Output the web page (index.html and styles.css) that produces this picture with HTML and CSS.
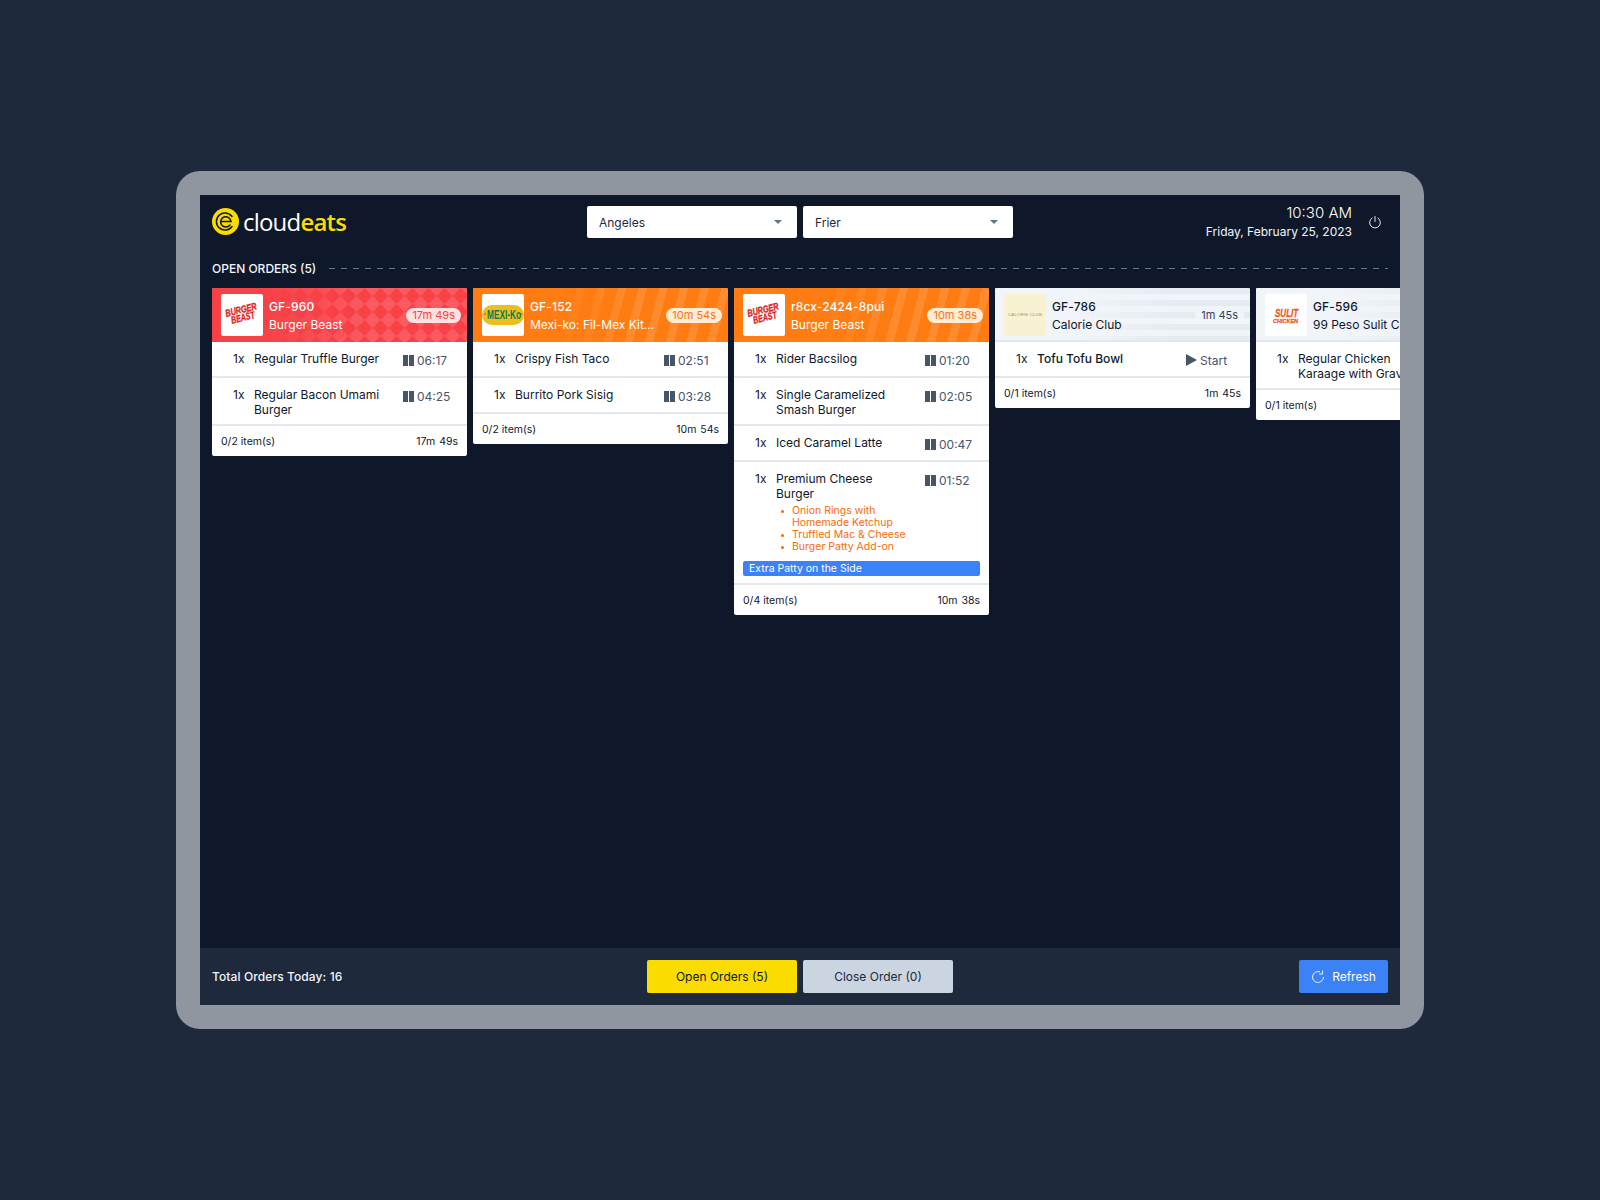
FILE: index.html
```html
<!DOCTYPE html>
<html lang="en">
<head>
    <meta charset="UTF-8">
    <title>CloudEats Kitchen Display</title>
    <link rel="stylesheet" href="styles.css">
</head>
<body>
    <div class="device">
        <div class="screen">
            <header class="topbar">
                <div class="logo">
                    <svg class="logo-mark" width="27" height="27" viewBox="0 0 27 27">
                        <circle cx="13.5" cy="13.5" r="13.5" fill="#fadc00"/>
                        <path d="M20 8.5a8.6 8.6 0 1 0 0 10" fill="none" stroke="#0f172a" stroke-width="1.5" stroke-linecap="round"/>
                        <path d="M18 17a5.2 5.2 0 1 1 1-3.5H9.5" fill="none" stroke="#0f172a" stroke-width="1.5" stroke-linecap="round"/>
                    </svg>
                    <span class="logo-text">cloud<b>eats</b></span>
                </div>
                <div class="selects">
                    <div class="select">Angeles <i class="caret"></i></div>
                    <div class="select">Frier <i class="caret"></i></div>
                </div>
                <div class="clock">
                    <div class="clock-text">
                        <div class="time">10:30 AM</div>
                        <div class="date">Friday, February 25, 2023</div>
                    </div>
                    <svg class="power" width="14" height="14" viewBox="0 0 14 14" fill="none" stroke="#e2e8f0" stroke-width="1" stroke-linecap="round">
                        <path d="M7 1.5v5"/>
                        <path d="M4 3a5.4 5.4 0 1 0 6 0"/>
                    </svg>
                </div>
            </header>

            <div class="section-title">
                <span>OPEN ORDERS (5)</span>
                <div class="dashes"></div>
            </div>

            <main class="board">
                <section class="card">
                    <div class="card-head red">
                        <div class="brand">
                            <svg viewBox="0 0 42 42" width="42" height="42"><g class="bb-logo" transform="rotate(-14 21 20)"><text transform="translate(5 19) scale(.74 1)">BURGER</text><text transform="translate(9 27) scale(.71 1)">BEAST</text></g></svg>
                        </div>
                        <div class="head-text">
                            <div class="order-no">GF-960</div>
                            <div class="store">Burger Beast</div>
                        </div>
                        <span class="badge badge-red">17m 49s</span>
                    </div>
                    <div class="row">
                        <span class="qty">1x</span>
                        <div class="item">Regular Truffle Burger</div>
                        <div class="timer"><i class="pause"></i>06:17</div>
                    </div>
                    <div class="row">
                        <span class="qty">1x</span>
                        <div class="item">Regular Bacon Umami Burger</div>
                        <div class="timer"><i class="pause"></i>04:25</div>
                    </div>
                    <div class="card-foot"><span>0/2 item(s)</span><span>17m 49s</span></div>
                </section>

                <section class="card">
                    <div class="card-head orange">
                        <div class="brand">
                            <svg viewBox="0 0 42 42" width="42" height="42">
                                <rect x="0" y="11" width="42" height="20" rx="10" fill="#ecc01c"/>
                                <circle cx="3" cy="20" r="1" fill="#e0567f"/>
                                <circle cx="39" cy="20" r="1" fill="#e0567f"/>
                                <text class="mexi-logo" transform="translate(5 25) scale(.64 1)">MEXI-Ko</text>
                            </svg>
                        </div>
                        <div class="head-text">
                            <div class="order-no">GF-152</div>
                            <div class="store">Mexi-ko: Fil-Mex Kitchen</div>
                        </div>
                        <span class="badge badge-orange">10m 54s</span>
                    </div>
                    <div class="row">
                        <span class="qty">1x</span>
                        <div class="item">Crispy Fish Taco</div>
                        <div class="timer"><i class="pause"></i>02:51</div>
                    </div>
                    <div class="row">
                        <span class="qty">1x</span>
                        <div class="item">Burrito Pork Sisig</div>
                        <div class="timer"><i class="pause"></i>03:28</div>
                    </div>
                    <div class="card-foot"><span>0/2 item(s)</span><span>10m 54s</span></div>
                </section>

                <section class="card">
                    <div class="card-head orange">
                        <div class="brand">
                            <svg viewBox="0 0 42 42" width="42" height="42"><g class="bb-logo" transform="rotate(-14 21 20)"><text transform="translate(5 19) scale(.74 1)">BURGER</text><text transform="translate(9 27) scale(.71 1)">BEAST</text></g></svg>
                        </div>
                        <div class="head-text">
                            <div class="order-no">r8cx-2424-8pui</div>
                            <div class="store">Burger Beast</div>
                        </div>
                        <span class="badge badge-orange">10m 38s</span>
                    </div>
                    <div class="row">
                        <span class="qty">1x</span>
                        <div class="item">Rider Bacsilog</div>
                        <div class="timer"><i class="pause"></i>01:20</div>
                    </div>
                    <div class="row">
                        <span class="qty">1x</span>
                        <div class="item">Single Caramelized Smash Burger</div>
                        <div class="timer"><i class="pause"></i>02:05</div>
                    </div>
                    <div class="row">
                        <span class="qty">1x</span>
                        <div class="item">Iced Caramel Latte</div>
                        <div class="timer"><i class="pause"></i>00:47</div>
                    </div>
                    <div class="row row-notes">
                        <div class="row-main">
                            <span class="qty">1x</span>
                            <div class="item">
                                Premium Cheese Burger
                                <ul class="addons">
                                    <li>Onion Rings with Homemade Ketchup</li>
                                    <li>Truffled Mac &amp; Cheese</li>
                                    <li>Burger Patty Add-on</li>
                                </ul>
                            </div>
                            <div class="timer"><i class="pause"></i>01:52</div>
                        </div>
                        <div class="note">Extra Patty on the Side</div>
                    </div>
                    <div class="card-foot"><span>0/4 item(s)</span><span>10m 38s</span></div>
                </section>

                <section class="card">
                    <div class="card-head grey">
                        <div class="brand brand-cream">
                            <svg viewBox="0 0 42 42" width="42" height="42"><text class="calorie-logo" x="21" y="22" text-anchor="middle">CALORIE CLUB</text></svg>
                        </div>
                        <div class="head-text">
                            <div class="order-no">GF-786</div>
                            <div class="store">Calorie Club</div>
                        </div>
                        <span class="badge badge-grey">1m 45s</span>
                    </div>
                    <div class="row">
                        <span class="qty">1x</span>
                        <div class="item item-new">Tofu Tofu Bowl</div>
                        <div class="timer"><i class="play"></i>Start</div>
                    </div>
                    <div class="card-foot"><span>0/1 item(s)</span><span>1m 45s</span></div>
                </section>

                <section class="card">
                    <div class="card-head grey">
                        <div class="brand">
                            <svg viewBox="0 0 42 42" width="42" height="42"><g class="sulit-logo"><text transform="translate(10 23) scale(.73 1)">SULIT</text><text class="sulit-sub" transform="translate(8 29) scale(.92 1)">CHICKEN</text></g></svg>
                        </div>
                        <div class="head-text">
                            <div class="order-no">GF-596</div>
                            <div class="store">99 Peso Sulit Chicken</div>
                        </div>
                        <span class="badge badge-grey">2m 10s</span>
                    </div>
                    <div class="row">
                        <span class="qty">1x</span>
                        <div class="item">Regular Chicken Karaage with Gravy</div>
                        <div class="timer"><i class="play"></i>Start</div>
                    </div>
                    <div class="card-foot"><span>0/1 item(s)</span><span>2m 10s</span></div>
                </section>
            </main>

            <footer class="bottombar">
                <div class="total">Total Orders Today: 16</div>
                <div class="tabs">
                    <button class="btn btn-yellow">Open Orders (5)</button>
                    <button class="btn btn-grey">Close Order (0)</button>
                </div>
                <button class="btn btn-blue">
                    <svg width="14" height="14" viewBox="0 0 14 14" fill="none" stroke="#fff" stroke-width="0.9" stroke-linecap="round" stroke-linejoin="round">
                        <path d="M8.6 1.7a5.5 5.5 0 1 0 3.9 5.6"/>
                        <path d="M11.6 1v3h-3"/>
                    </svg>
                    Refresh
                </button>
            </footer>
        </div>
    </div>
</body>
</html>
```

FILE: styles.css
```css
* {
    box-sizing: border-box;
}

body {
    margin: 0;
    height: 1200px;
    background-color: #1e293b;
    font-family: Inter, "Liberation Sans", sans-serif;
    overflow: hidden;
}

.device {
    width: 1248px;
    height: 858px;
    margin: 171px 0 0 176px;
    padding: 24px;
    background-color: #8f96a0;
    border-radius: 24px;
}

.screen {
    height: 810px;
    background-color: #0f172a;
    display: flex;
    flex-direction: column;
    overflow: hidden;
}

/* top bar */
.topbar {
    height: 64px;
    padding: 8px 12px 0;
    flex: none;
    display: grid;
    grid-template-columns: 1fr auto 1fr;
    align-items: start;
}

.logo {
    margin-top: 5px;
    display: flex;
    align-items: center;
    gap: 4px;
}

.logo-text {
    font-family: "Open Sans", sans-serif;
    font-size: 24px;
    font-weight: 500;
    letter-spacing: -0.8px;
    color: #fff;
    line-height: 27px;
}

.logo-text b {
    color: #fadc00;
    font-weight: 600;
}

.selects {
    margin-top: 3px;
    display: flex;
    gap: 6px;
}

.select {
    width: 210px;
    height: 32px;
    padding: 0 12px;
    background-color: #fff;
    border-radius: 2px;
    font-size: 12px;
    color: #1e293b;
    display: flex;
    align-items: center;
    justify-content: space-between;
}

.caret {
    width: 0;
    height: 0;
    margin-right: 3px;
    border-left: 4.5px solid transparent;
    border-right: 4.5px solid transparent;
    border-top: 4.5px solid #64748b;
}

.clock {
    display: flex;
    justify-content: flex-end;
    align-items: center;
    gap: 16px;
    padding-right: 6px;
}

.clock-text {
    text-align: right;
    color: #fff;
}

.time {
    font-size: 15px;
    font-weight: 300;
    line-height: 20px;
}

.date {
    font-size: 12px;
    line-height: 18px;
    color: #f1f5f9;
}

.section-title {
    flex: none;
    height: 18px;
    padding: 0 12px;
    display: flex;
    align-items: center;
    gap: 13px;
    font-size: 12px;
    font-weight: 500;
    color: #f1f5f9;
}

.dashes {
    flex: 1;
    height: 1px;
    background-image: repeating-linear-gradient(to right, #64748b 0, #64748b 6px, transparent 6px, transparent 12px);
}

/* cards */
.board {
    flex: 1;
    padding: 11px 0 0 12px;
    display: flex;
    align-items: flex-start;
    gap: 6px;
    overflow: hidden;
}

.card {
    width: 255px;
    flex: none;
    background-color: #fff;
    border-radius: 2px;
    overflow: hidden;
}

.card-head {
    height: 54px;
    padding: 6px;
    padding-left: 9px;
    display: flex;
    align-items: center;
    gap: 6px;
    color: #fff;
}

.red {
    background-color: #f74147;
    background-image:
        linear-gradient(to right, #f74147 20%, rgba(247, 65, 71, 0) 60%),
        linear-gradient(45deg, #fb5a60 25%, transparent 25%),
        linear-gradient(-45deg, #fb5a60 25%, transparent 25%),
        linear-gradient(135deg, #fb5a60 25%, transparent 25%),
        linear-gradient(-135deg, #fb5a60 25%, transparent 25%);
    background-size: 100% 100%, 16px 16px, 16px 16px, 16px 16px, 16px 16px;
}

.orange {
    background-color: #fe7c12;
    background-image:
        linear-gradient(to right, #fe7c12 30%, rgba(254, 124, 18, 0) 65%),
        repeating-linear-gradient(105deg, rgba(255, 255, 255, 0.12) 0, rgba(255, 255, 255, 0.12) 8px, transparent 8px, transparent 20px);
}

.grey {
    color: #0f172a;
    background-color: #f1f5f9;
    background-image:
        linear-gradient(to right, #f1f5f9 30%, rgba(241, 245, 249, 0) 70%),
        repeating-linear-gradient(to bottom, #e6ebf2 0, #e6ebf2 6px, #f1f5f9 6px, #f1f5f9 12px);
    box-shadow: inset 0 -2px 0 #e2e8f0;
}

.brand {
    width: 42px;
    height: 42px;
    flex: none;
    background-color: #fff;
    border-radius: 2px;
    overflow: hidden;
}

.brand-cream {
    background-color: #f8f1d2;
}

.brand svg {
    display: block;
}

.bb-logo {
    font-family: "Liberation Sans", sans-serif;
    font-weight: 700;
    font-style: italic;
    font-size: 10px;
    fill: #dc2626;
    stroke: #dc2626;
    stroke-width: 0.4px;
}

.mexi-logo {
    font-family: "Liberation Sans", sans-serif;
    font-weight: 700;
    font-size: 13px;
    fill: #0d7a57;
}

.calorie-logo {
    font-family: "Liberation Sans", sans-serif;
    font-size: 4.4px;
    letter-spacing: 0.15px;
    fill: #94a052;
}

.sulit-logo {
    font-family: "Liberation Sans", sans-serif;
    font-weight: 700;
    font-style: italic;
    font-size: 11px;
    fill: #ea5a1a;
    stroke: #ea5a1a;
    stroke-width: 0.3px;
}

.sulit-sub {
    font-size: 6px;
}

.head-text {
    flex: 1;
    min-width: 0;
    margin-top: 2px;
}

.order-no {
    font-size: 12px;
    font-weight: 500;
    letter-spacing: 0.15px;
    line-height: 18px;
    white-space: nowrap;
}

.store {
    font-size: 12px;
    line-height: 18px;
    white-space: nowrap;
    overflow: hidden;
    text-overflow: ellipsis;
}

.badge {
    flex: none;
    font-size: 11px;
    line-height: 15px;
    padding: 0 6px;
    border-radius: 8px;
}

.badge-red {
    color: #f74147;
    background-color: #fee2e2;
}

.badge-orange {
    color: #f97316;
    background-color: #ffedd5;
}

.badge-grey {
    color: #334155;
    background-color: #f1f5f9;
}

/* order rows */
.row {
    padding: 9px 9px 7px 21px;
    border-bottom: 2px solid #e2e8f0;
    display: flex;
    align-items: flex-start;
    font-size: 12px;
    line-height: 15px;
    color: #0f172a;
}

.row-notes {
    display: block;
    padding-left: 9px;
}

.row-main {
    display: flex;
    align-items: flex-start;
    padding-left: 12px;
}

.qty {
    width: 21px;
    flex: none;
}

.item {
    flex: 1;
    min-width: 0;
    padding-right: 14px;
}

.item-new {
    font-weight: 500;
}

.timer {
    width: 55px;
    height: 18px;
    flex: none;
    display: flex;
    align-items: center;
    color: #475569;
    white-space: nowrap;
}

.pause {
    width: 11px;
    height: 11px;
    margin-right: 3px;
    flex: none;
    background-image: linear-gradient(to right, #475569 0, #475569 45%, transparent 45%, transparent 55%, #475569 55%);
}

.play {
    width: 0;
    height: 0;
    margin-right: 3px;
    flex: none;
    border-top: 6px solid transparent;
    border-bottom: 6px solid transparent;
    border-left: 11px solid #475569;
}

.addons {
    margin: 4px -14px 0 0;
    padding: 0 0 0 16px;
    list-style: none;
    font-size: 10.5px;
    line-height: 12px;
    color: #f96a0a;
}

.addons li {
    position: relative;
}

.addons li::before {
    content: "";
    position: absolute;
    left: -11px;
    top: 5px;
    width: 3px;
    height: 3px;
    border-radius: 50%;
    background-color: #f96a0a;
}

.note {
    margin-top: 8px;
    height: 15px;
    padding: 0 6px;
    background-color: #3b82f6;
    border-radius: 2px;
    color: #fff;
    font-size: 10.5px;
    line-height: 15px;
}

.card-foot {
    height: 30px;
    padding: 0 9px;
    display: flex;
    align-items: center;
    justify-content: space-between;
    font-size: 10.5px;
    color: #0f172a;
}

.card-foot span:last-child {
    word-spacing: 1px;
}

/* bottom bar */
.bottombar {
    flex: none;
    height: 57px;
    padding: 0 12px;
    background-color: #1e293b;
    display: grid;
    grid-template-columns: 1fr auto 1fr;
    align-items: center;
}

.total {
    font-size: 12px;
    font-weight: 500;
    letter-spacing: 0.1px;
    color: #f1f5f9;
}

.tabs {
    display: flex;
    gap: 6px;
}

.btn {
    height: 33px;
    border: none;
    border-radius: 2px;
    font-family: inherit;
    font-size: 12px;
    display: flex;
    align-items: center;
    justify-content: center;
    gap: 7px;
}

.btn-yellow {
    width: 150px;
    background-color: #fadc00;
    color: #0f172a;
}

.btn-grey {
    width: 150px;
    background-color: #cbd5e1;
    color: #1e293b;
}

.btn-blue {
    width: 89px;
    justify-self: end;
    background-color: #3b82f6;
    color: #fff;
}
```
